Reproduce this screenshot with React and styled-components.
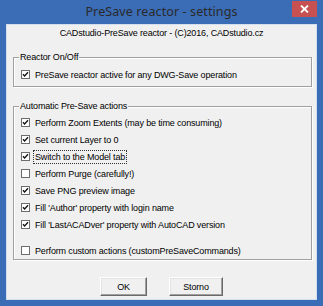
import React from "react";
import styled, { createGlobalStyle } from "styled-components";

const GlobalStyle = createGlobalStyle`
  body {
    margin: 0;
    background: #3b6cb6;
  }
`;

const actions = [
  { label: "Perform Zoom Extents (may be time consuming)", checked: true },
  { label: "Set current Layer to 0", checked: true },
  { label: "Switch to the Model tab", checked: true, focused: true },
  { label: "Perform Purge (carefully!)", checked: false },
  { label: "Save PNG preview image", checked: true },
  { label: "Fill 'Author' property with login name", checked: true },
  { label: "Fill 'LastACADver' property with AutoCAD version", checked: true },
];

const CheckBox = ({ checked }) => (
  <Box>
    {checked && (
      <svg width="9" height="9" viewBox="0 0 9 9">
        <path d="M2 4.2 L3.6 6 L7 2.2" fill="none" stroke="#111" strokeWidth="1.3" />
      </svg>
    )}
  </Box>
);

const CheckRow = ({ label, checked, focused, gapTop }) => (
  <Row $gapTop={gapTop}>
    <CheckBox checked={checked} />
    {focused ? <Focused>{label}</Focused> : <span>{label}</span>}
  </Row>
);

const App = () => {
  return (
    <>
      <GlobalStyle />
      <Window>
        <TitleBar>
          <Title>PreSave reactor - settings</Title>
          <CloseButton>
            <svg width="9" height="8" viewBox="0 0 9 8">
              <path d="M1 0.5 L8 7.5 M8 0.5 L1 7.5" stroke="#fff" strokeWidth="1.8" />
            </svg>
          </CloseButton>
        </TitleBar>
        <Client>
          <Subtitle>CADstudio-PreSave reactor - (C)2016, CADstudio.cz</Subtitle>
          <Group $top={12}>
            <Legend>Reactor On/Off</Legend>
            <GroupBody $pt={3} $pb={3}>
              <CheckRow label="PreSave reactor active for any DWG-Save operation" checked />
            </GroupBody>
          </Group>
          <Group $top={13}>
            <Legend>Automatic Pre-Save actions</Legend>
            <GroupBody $pt={2} $pb={0}>
              {actions.map((a) => (
                <CheckRow key={a.label} {...a} />
              ))}
              <CheckRow
                label="Perform custom actions (customPreSaveCommands)"
                checked={false}
                gapTop={9}
              />
            </GroupBody>
          </Group>
          <Buttons>
            <Button $w={47}>OK</Button>
            <Button $w={54}>Storno</Button>
          </Buttons>
        </Client>
      </Window>
    </>
  );
};

const Window = styled.div`
  width: 323px;
  height: 306px;
  box-sizing: border-box;
  background: #3b6cb6;
  display: flex;
  flex-direction: column;
  font-family: "Liberation Sans", Arial, sans-serif;
  font-size: 9px;
  letter-spacing: -0.15px;
  color: #000;
`;

const TitleBar = styled.div`
  height: 24px;
  display: grid;
  grid-template-columns: 1fr auto 1fr;
`;

const Title = styled.div`
  grid-column: 2;
  font-family: "Noto Sans", "Open Sans", sans-serif;
  font-size: 12.5px;
  letter-spacing: 0.1px;
  line-height: 24px;
  color: #2a2a2a;
  padding-bottom: 1px;
`;

const CloseButton = styled.div`
  grid-column: 3;
  justify-self: end;
  align-self: start;
  width: 25px;
  height: 16px;
  margin: 1px 6px 0 0;
  background: #c75050;
  display: flex;
  align-items: center;
  justify-content: center;
`;

const Client = styled.div`
  flex: 1;
  margin: 0 6px 6px 6px;
  border: 1px solid #d4dfee;
  background: #f0f0f0;
  display: flex;
  flex-direction: column;
`;

const Subtitle = styled.div`
  padding-top: 2px;
  line-height: 12px;
  text-align: center;
`;

const Group = styled.fieldset`
  margin: ${(p) => p.$top}px 4px 0 6px;
  padding: 0;
  min-width: 0;
  border: 1px solid #a0a0a0;
  box-shadow: 1px 1px 0 #fff, inset 1px 1px 0 #fff;
`;

const Legend = styled.legend`
  margin-left: 5px;
  padding: 0 1px;
  line-height: 12px;
  background: #f0f0f0;
`;

const GroupBody = styled.div`
  padding: ${(p) => p.$pt}px 0 ${(p) => p.$pb}px 7px;
  display: flex;
  flex-direction: column;
`;

const Row = styled.div`
  height: 17px;
  margin-top: ${(p) => p.$gapTop || 0}px;
  display: flex;
  align-items: center;
  gap: 5px;
  white-space: nowrap;
`;

const Box = styled.div`
  width: 9px;
  height: 9px;
  box-sizing: border-box;
  border: 1px solid #6d6d6d;
  background: #fff;
  display: flex;
  align-items: center;
  justify-content: center;
  flex-shrink: 0;
  svg {
    margin: -1px;
  }
`;

const Focused = styled.span`
  border: 1px dotted #333;
  padding: 1px 1px;
  margin-left: -2px;
`;

const Buttons = styled.div`
  margin-top: 17px;
  display: flex;
  justify-content: center;
  gap: 22px;
`;

const Button = styled.button`
  width: ${(p) => p.$w}px;
  height: 19px;
  padding: 0;
  font-family: "Liberation Sans", Arial, sans-serif;
  font-size: 9px;
  letter-spacing: -0.15px;
  color: #000;
  background: #f0f0f0;
  border: 1px solid;
  border-color: #fff #696969 #696969 #fff;
  box-shadow: inset -1px -1px 0 #a0a0a0, inset 1px 1px 0 #e3e3e3;
`;

export default App;
